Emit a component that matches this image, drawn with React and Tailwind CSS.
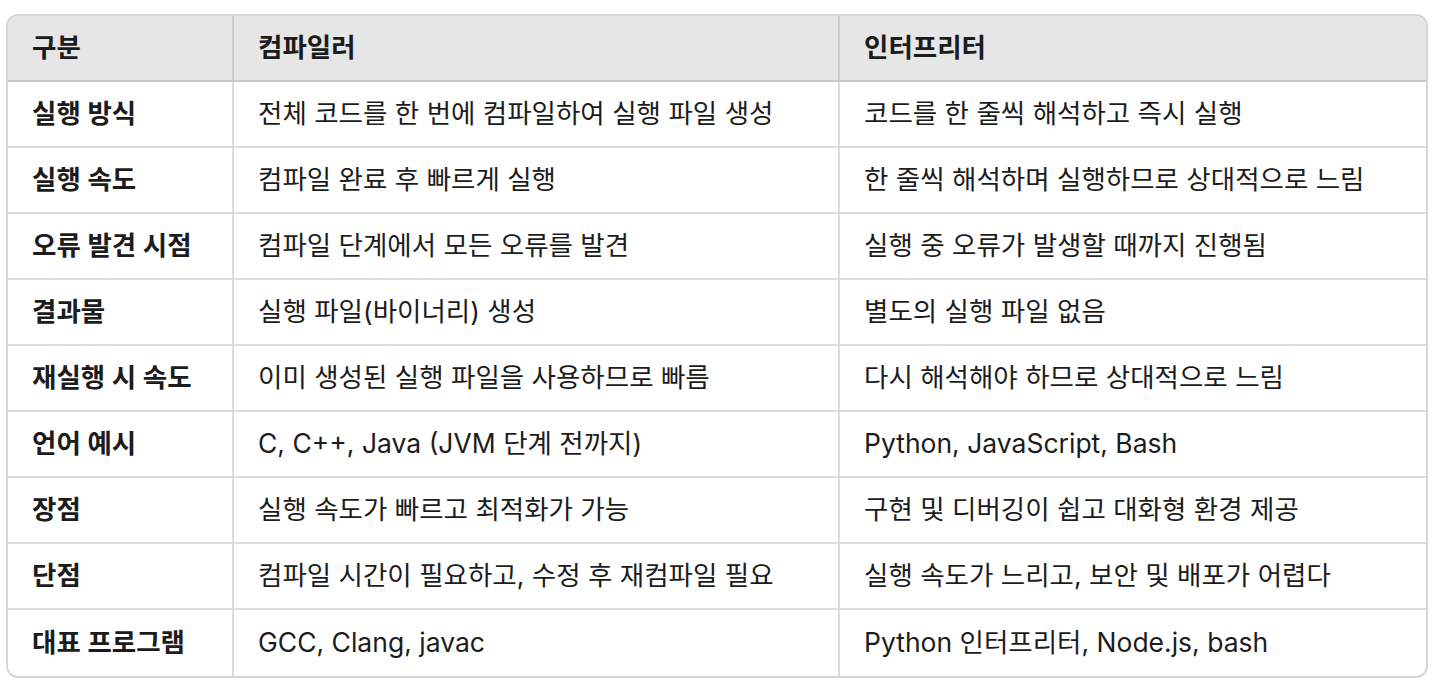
const rows = [
  ['실행 방식', '전체 코드를 한 번에 컴파일하여 실행 파일 생성', '코드를 한 줄씩 해석하고 즉시 실행'],
  ['실행 속도', '컴파일 완료 후 빠르게 실행', '한 줄씩 해석하며 실행하므로 상대적으로 느림'],
  ['오류 발견 시점', '컴파일 단계에서 모든 오류를 발견', '실행 중 오류가 발생할 때까지 진행됨'],
  ['결과물', '실행 파일(바이너리) 생성', '별도의 실행 파일 없음'],
  ['재실행 시 속도', '이미 생성된 실행 파일을 사용하므로 빠름', '다시 해석해야 하므로 상대적으로 느림'],
  ['언어 예시', 'C, C++, Java (JVM 단계 전까지)', 'Python, JavaScript, Bash'],
  ['장점', '실행 속도가 빠르고 최적화가 가능', '구현 및 디버깅이 쉽고 대화형 환경 제공'],
  ['단점', '컴파일 시간이 필요하고, 수정 후 재컴파일 필요', '실행 속도가 느리고, 보안 및 배포가 어렵다'],
  ['대표 프로그램', 'GCC, Clang, javac', 'Python 인터프리터, Node.js, bash'],
];

export default function App() {
  return (
    <div className="min-h-screen bg-white pt-[14px] pl-[6px] pr-[14px] font-['Inter','Noto_Sans_CJK_KR',sans-serif] text-[26.5px] text-[#1c1c1c]">
      <div className="rounded-[12px] border-2 border-[#d6d6d6] overflow-hidden">
        {/* Header */}
        <div className="grid grid-cols-[226px_606px_1fr] h-[66px] bg-[#e6e6e6] border-b-2 border-[#c9c9c9] font-semibold">
          <div className="flex items-center px-6 border-r-2 border-[#cacaca]">구분</div>
          <div className="flex items-center px-6 border-r-2 border-[#cacaca]">컴파일러</div>
          <div className="flex items-center px-6">인터프리터</div>
        </div>

        {/* Body */}
        {rows.map((r, i) => (
          <div
            key={i}
            className={
              'grid grid-cols-[226px_606px_1fr] h-[66px] ' +
              (i < rows.length - 1 ? 'border-b-2 border-[#dcdcdc]' : '')
            }
          >
            <div className="flex items-center px-6 border-r-2 border-[#dcdcdc] font-semibold whitespace-nowrap">{r[0]}</div>
            <div className="flex items-center px-6 border-r-2 border-[#dcdcdc] whitespace-nowrap">{r[1]}</div>
            <div className="flex items-center px-6 whitespace-nowrap">{r[2]}</div>
          </div>
        ))}
      </div>
    </div>
  );
}
